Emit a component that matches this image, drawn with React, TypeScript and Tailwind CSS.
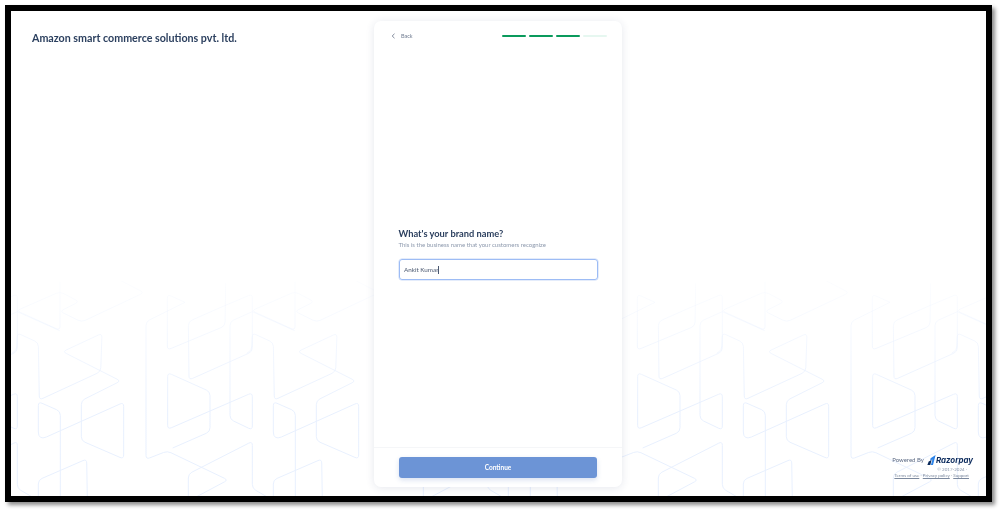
import React from 'react'

// background lines, in 3x units of the picture, one tile is 705 wide
const LINES: number[][][] = [
	[[180, 35], [180, 181], [50, 122], [180, 65], [237, 95], [180, 124], [245, 156], [432, 68], [355, 28]],
	[[35, 250], [50, 240], [52, 189], [115, 218], [118, 390], [302, 305], [306, 190], [188, 245], [362, 333], [244, 392], [244, 512], [371, 567], [371, 397], [128, 506], [115, 498], [115, 395], [181, 424], [181, 690]],
	[[555, 97], [502, 73], [502, 240], [675, 168], [677, 40]],
	[[555, 97], [438, 155], [438, 568], [502, 543], [684, 630], [590, 680]],
	[[660, 113], [565, 155], [567, 330], [757, 245], [757, 72], [660, 113]],
	[[757, 125], [884, 182]],
	[[757, 125], [690, 155], [690, 448], [757, 480], [757, 368], [503, 478], [503, 308], [630, 365], [630, 485], [518, 534]],
	[[565, 690], [565, 612], [757, 514], [757, 655], [800, 680]],
	[[115, 690], [115, 630], [260, 567], [262, 690]],
]

// polyline with rounded corners
const toPath = (pts: number[][], r = 12) => {
	let d = `M${pts[0][0]} ${pts[0][1]}`
	for (let i = 1; i < pts.length - 1; i++) {
		const [px, py] = pts[i - 1]
		const [x, y] = pts[i]
		const [nx, ny] = pts[i + 1]
		const a = Math.hypot(px - x, py - y)
		const b = Math.hypot(nx - x, ny - y)
		const ra = Math.min(r, a / 2)
		const rb = Math.min(r, b / 2)
		d += `L${x + ((px - x) / a) * ra} ${y + ((py - y) / a) * ra}Q${x} ${y} ${x + ((nx - x) / b) * rb} ${y + ((ny - y) / b) * rb}`
	}
	const last = pts[pts.length - 1]
	return `${d}L${last[0]} ${last[1]}`
}

const Pattern = () => (
	<svg className="absolute left-0 bottom-0 w-[975px] h-[215px]" viewBox="33 33 2925 645" fill="none">
		<defs>
			<linearGradient id="fade" gradientUnits="userSpaceOnUse" x1="0" y1="25" x2="0" y2="420">
				<stop offset="0" stopColor="#edf3fe" stopOpacity="0.15" />
				<stop offset="1" stopColor="#e8f0fe" />
			</linearGradient>
		</defs>
		{[-705, 0, 705, 1410, 2115, 2820].map((dx) => (
			<g key={dx} transform={`translate(${dx} 0)`}>
				{LINES.map((pts, i) => (
					<path key={i} d={toPath(pts)} stroke="url(#fade)" strokeWidth="3" />
				))}
			</g>
		))}
	</svg>
)

const RazorpayMark = () => (
	<svg width="9" height="10" viewBox="0 0 9 10" className="shrink-0">
		<path d="M3.6 3.2 8.6 0 6 10H3.9L5.4 4.4 3.1 5.8Z" fill="#2b83ea" />
		<path d="M1.7 6.6 0.4 10H3.3L4.6 5Z" fill="#0b2a5c" />
	</svg>
)

const App = () => {
	return (
		<div className="w-[1005px] h-[515px] bg-white overflow-hidden pl-[5px] pt-[5px] font-['Lato',sans-serif]">
			<div className="relative w-[987px] h-[497px] border-[6px] border-black bg-white flex shadow-[3px_3px_4px_rgba(0,0,0,0.45)] overflow-hidden blur-[0.35px]">
				<Pattern />

				<div className="relative w-[363px] pl-[21px] pt-[20px]">
					<h1 className="text-[10.7px] leading-[14px] font-bold text-[#2b3f5e]">Amazon smart commerce solutions pvt. ltd.</h1>
				</div>

				<div className="relative mt-[10px] w-[248px] h-[466px] bg-white rounded-[7px] shadow-[0_1px_8px_rgba(40,60,110,0.12)] flex flex-col">
					<div className="flex items-center justify-between h-[29px] pl-[17px] pr-[15px] pt-[1px]">
						<div className="flex items-center gap-[5px] text-[5.5px] text-[#6f7b90]">
							<svg width="5" height="6" viewBox="0 0 5 6" fill="none">
								<path d="M3.5 0.8 1.2 3l2.3 2.2" stroke="#5f6b80" strokeWidth="0.8" />
							</svg>
							<span>Back</span>
						</div>
						<div className="flex gap-[3px]">
							<div className="w-[24px] h-[2.5px] rounded-full bg-[#0a9a5c]" />
							<div className="w-[24px] h-[2.5px] rounded-full bg-[#0a9a5c]" />
							<div className="w-[24px] h-[2.5px] rounded-full bg-[#0a9a5c]" />
							<div className="w-[24px] h-[2.5px] rounded-full bg-[#e6f7f0]" />
						</div>
					</div>

					<div className="flex-1 px-[24.5px] flex flex-col justify-center">
						<h2 className="text-[9.3px] leading-[13px] font-bold text-[#2b3f5e] mt-[10px]">What's your brand name?</h2>
						<p className="text-[6px] leading-[8px] mt-[1px] text-[#8d99ad]">This is the business name that your customers recognize</p>
						<div className="mt-[10px] h-[21px] w-[199px] border border-[#9dbcf5] rounded-[3px] shadow-[0_0_0_0.5px_#c9daf8] flex items-center pl-[4.5px] text-[6.3px] text-[#4a5870]">
							<span>Ankit Kumar</span>
							<span className="w-[0.5px] h-[8px] bg-[#4a5870]" />
						</div>
					</div>

					<div className="h-[40px] border-t border-[#f5f6f8] px-[25px] pt-[9px]">
						<button className="block w-[198px] h-[21px] rounded-[3px] bg-[#6c94d6] text-white text-[6.5px] font-bold shadow-[0_2px_5px_rgba(60,100,180,0.2)]">Continue</button>
					</div>
				</div>

				<div className="relative flex-1 flex flex-col items-end justify-end pr-[13px] pb-[17.5px]">
					<div className="flex items-center">
						<span className="text-[6px] text-[#5d6b85] mr-[3px]">Powered By</span>
						<RazorpayMark />
						<span className="text-[7.9px] leading-[12px] font-bold italic text-[#0b2a5c] font-['Inter',sans-serif]">Razorpay</span>
					</div>
					<div className="text-[4.5px] leading-[7px] text-[#8d99ad] pr-[6px]">© 2017-2024 ·</div>
					<div className="text-[4.5px] leading-[6px] text-[#7c899e] pr-[4px]">
						<span className="underline">Terms of use</span> · <span className="underline">Privacy policy</span> · <span className="underline">Support</span>
					</div>
				</div>
			</div>
		</div>
	)
}

export default App
